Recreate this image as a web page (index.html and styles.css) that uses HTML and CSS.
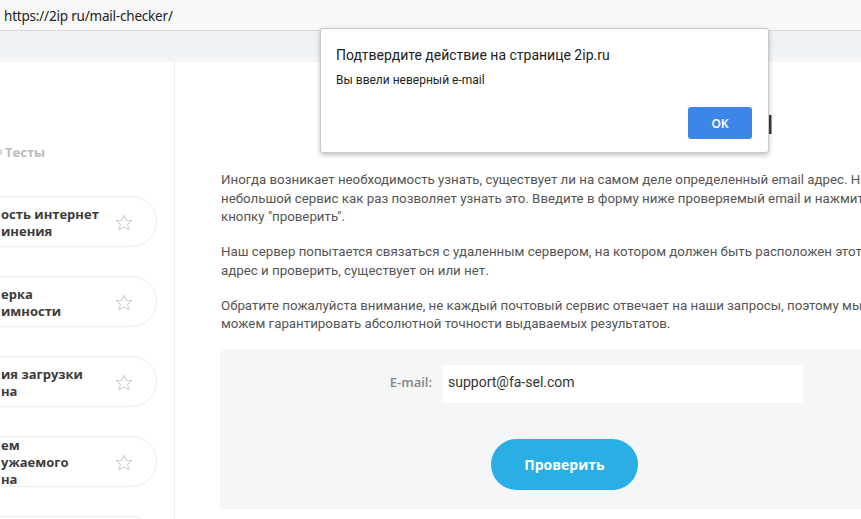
FILE: index.html
```html
<!DOCTYPE html>
<html lang="ru">
<head>
<meta charset="utf-8">
<title>Проверка существования email</title>
<link rel="stylesheet" href="styles.css">
</head>
<body>
<div class="urlbar">https://2ip ru/mail-checker/</div>
<div class="topband"></div>
<div class="page">
  <aside class="sidebar">
    <div class="section-title"><span class="sec-icon"></span>Тесты</div>
    <ul class="cards">
      <li class="card"><span class="card-text">ость интернет<br>инения</span><svg class="star" viewBox="0 0 24 24"><path d="M12 2.8l2.7 5.9 6.4.7-4.8 4.3 1.4 6.3L12 16.8l-5.7 3.2 1.4-6.3-4.8-4.3 6.4-.7z"/></svg></li>
      <li class="card"><span class="card-text">ерка<br>имности</span><svg class="star" viewBox="0 0 24 24"><path d="M12 2.8l2.7 5.9 6.4.7-4.8 4.3 1.4 6.3L12 16.8l-5.7 3.2 1.4-6.3-4.8-4.3 6.4-.7z"/></svg></li>
      <li class="card"><span class="card-text">ия загрузки<br>на</span><svg class="star" viewBox="0 0 24 24"><path d="M12 2.8l2.7 5.9 6.4.7-4.8 4.3 1.4 6.3L12 16.8l-5.7 3.2 1.4-6.3-4.8-4.3 6.4-.7z"/></svg></li>
      <li class="card"><span class="card-text">ем<br>ужаемого<br>на</span><svg class="star" viewBox="0 0 24 24"><path d="M12 2.8l2.7 5.9 6.4.7-4.8 4.3 1.4 6.3L12 16.8l-5.7 3.2 1.4-6.3-4.8-4.3 6.4-.7z"/></svg></li>
      <li class="card"><span class="card-text"></span></li>
    </ul>
  </aside>
  <main class="main">
    <h1 class="title">Проверка email</h1>
    <p>Иногда возникает необходимость узнать, существует ли на самом деле определенный email адрес. Наш небольшой сервис как раз позволяет узнать это. Введите в форму ниже проверяемый email и нажмите на кнопку "проверить".</p>
    <p>Наш сервер попытается связаться с удаленным сервером, на котором должен быть расположен этот email адрес и проверить, существует он или нет.</p>
    <p>Обратите пожалуйста внимание, не каждый почтовый сервис отвечает на наши запросы, поэтому мы не можем гарантировать абсолютной точности выдаваемых результатов.</p>
    <form class="checker">
      <div class="row">
        <label class="label" for="email">E-mail:</label>
        <input class="input" id="email" type="text" value="support@fa-sel.com">
      </div>
      <button class="btn" type="button">Проверить</button>
    </form>
  </main>
</div>
<div class="dialog">
  <div class="dialog-title">Подтвердите действие на странице 2ip.ru</div>
  <div class="dialog-msg">Вы ввели неверный e-mail</div>
  <div class="dialog-actions"><button class="ok" type="button">OK</button></div>
</div>
</body>
</html>
```
FILE: styles.css
```css
* { box-sizing: border-box; }
html, body { margin: 0; padding: 0; }
body {
  width: 861px;
  height: 519px;
  overflow: hidden;
  background: #fff;
  position: relative;
  font-family: Roboto, "Noto Sans", sans-serif;
}
.urlbar {
  height: 31px;
  background: #f8f8f8;
  border-bottom: 1px solid #d9d9d9;
  padding: 7px 0 0 4px;
  font-family: "Noto Sans", sans-serif;
  font-size: 13.5px;
  color: #222;
  letter-spacing: -0.2px;
}
.topband {
  height: 31px;
  background: linear-gradient(#eef2f6, #eef2f6 65%, #f6f6f6);
}
.page {
  display: flex;
  height: 457px;
}
.sidebar {
  width: 175px;
  flex: none;
  border-right: 1px solid #f0f0f0;
  overflow: hidden;
  padding-top: 81px;
}
.section-title {
  display: flex;
  align-items: center;
  height: 18px;
  font-family: "Open Sans", sans-serif;
  font-weight: 700;
  font-size: 13px;
  color: #bcbcbc;
  padding-left: 5px;
}
.sec-icon {
  width: 2px; height: 6px;
  background: #d8d8d8;
  margin-left: -5px;
  margin-right: 3px;
}
.cards {
  list-style: none;
  margin: 35px 0 0;
  padding: 0;
  display: flex;
  flex-direction: column;
  gap: 29px;
}
.card {
  margin-left: -40px;
  width: 197px;
  height: 51px;
  border: 1px solid #ececec;
  border-radius: 26px;
  display: flex;
  align-items: center;
  justify-content: space-between;
  padding: 2px 22px 0 40px;
  background: #fff;
  flex: none;
}
.card-text {
  font-family: "Open Sans", sans-serif;
  font-weight: 700;
  font-size: 13px;
  line-height: 17px;
  color: #3b3b3b;
  white-space: nowrap;
}
.star {
  width: 20px; height: 20px;
  fill: none;
  stroke: #cfcfcf;
  stroke-width: 1.3;
  stroke-linejoin: round;
  flex: none;
}
.main {
  flex: none;
  width: 700px;
  padding-left: 46px;
}
.title {
  margin: 49px 0 0;
  height: 28px;
  width: 552px;
  text-align: right;
  font-family: "Open Sans", sans-serif;
  font-size: 24px;
  line-height: 28px;
  font-weight: 800;
  color: #3a3a3a;
}
.main p {
  width: 690px;
  margin: 32px 0 0;
  font-size: 13.3px;
  line-height: 18.5px;
  color: #555;
}
.main p + p { margin-top: 16.5px; }
.checker {
  margin: 15px 0 0 -1px;
  width: 690px;
  height: 160px;
  background: #f4f6f8;
  padding-top: 16px;
  display: flex;
  flex-direction: column;
  align-items: center;
}
.row {
  align-self: stretch;
  display: flex;
  align-items: center;
  gap: 11px;
}
.label {
  width: 212px;
  text-align: right;
  font-family: "Open Sans", sans-serif;
  font-weight: 600;
  font-size: 13px;
  color: #858585;
  margin-top: -3px;
}
.input {
  width: 360px;
  height: 38px;
  border: none;
  background: #fff;
  padding: 0 5px 3px;
  font-family: Roboto, sans-serif;
  font-size: 14px;
  color: #333;
  outline: none;
}
.btn {
  margin-top: 36px;
  width: 147px;
  height: 51px;
  border: none;
  border-radius: 26px;
  background: #2aafe4;
  color: #fff;
  font-family: "Open Sans", sans-serif;
  font-weight: 700;
  font-size: 14px;
  margin-left: -1px;
}
.dialog {
  position: absolute;
  left: 320px;
  top: 28px;
  width: 449px;
  height: 125px;
  background: #fff;
  border: 1px solid #c9c9c9;
  border-radius: 3px;
  box-shadow: 0 2px 5px rgba(0,0,0,0.25);
  padding: 17px 16px 0 15px;
  font-family: Roboto, "Noto Sans", sans-serif;
  color: #222;
}
.dialog-title {
  font-size: 14px;
  line-height: 18px;
}
.dialog-msg {
  margin-top: 8px;
  font-size: 12px;
  line-height: 16px;
}
.dialog-actions {
  display: flex;
  justify-content: flex-end;
  margin-top: 19px;
}
.ok {
  width: 64px;
  height: 32px;
  border: none;
  border-radius: 3px;
  background: #3b86e8;
  color: #fff;
  font-family: "Noto Sans", sans-serif;
  font-size: 12px;
  font-weight: 600;
}
```
